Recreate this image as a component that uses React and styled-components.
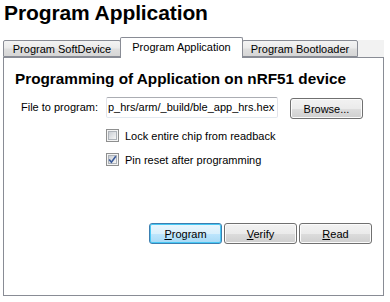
import React from "react";
import styled, { createGlobalStyle } from "styled-components";

const Global = createGlobalStyle`
  html, body { margin: 0; padding: 0; background: #fff; }
  body { font-family: "Liberation Sans", Arial, sans-serif; color: #000; }
`;

const Page = styled.div`
  width: 390px;
  height: 302px;
  box-sizing: border-box;
  padding: 1px 0 0 3px;
`;

const Title = styled.h1`
  margin: 0 0 12px 1px;
  height: 24px;
  font-size: 21px;
  line-height: 24px;
  font-weight: bold;
  letter-spacing: -0.1px;
`;

const TabStrip = styled.div`
  display: flex;
  align-items: flex-end;
  width: 381px;
  height: 20px;
`;

const Tab = styled.div`
  position: relative;
  box-sizing: border-box;
  width: ${(p) => p.$w}px;
  margin-left: ${(p) => (p.$first ? 0 : -1)}px;
  height: ${(p) => (p.$active ? 21 : 17)}px;
  margin-bottom: ${(p) => (p.$active ? -1 : 0)}px;
  z-index: ${(p) => (p.$active ? 2 : 1)};
  border: 1px solid #898c95;
  border-bottom: ${(p) => (p.$active ? "none" : "1px solid #898c95")};
  border-radius: 2px 2px 0 0;
  background: ${(p) =>
    p.$active
      ? "#fff"
      : "linear-gradient(#f3f3f3 0%, #ebebeb 45%, #dedede 55%, #d6d6d6 100%)"};
  font-size: 11px;
  line-height: 15px;
  text-align: center;
  white-space: nowrap;
  padding-top: ${(p) => (p.$active ? 2 : 1)}px;
`;

const TabFiller = styled.div`
  flex: 1;
  height: 17px;
  background: #f2f2f2;
`;

const Panel = styled.div`
  position: relative;
  z-index: 1;
  box-sizing: border-box;
  width: 381px;
  height: 239px;
  border: 1px solid #898c95;
  background: #fff;
  padding: 12px 11px 0 1px;
  display: flex;
  flex-direction: column;
`;

const Heading = styled.h2`
  margin: 0 0 9px 10px;
  font-size: 15.3px;
  line-height: 18px;
  font-weight: bold;
`;

const Form = styled.div`
  display: grid;
  grid-template-columns: 101px 172px 85px;
  align-items: start;
`;

const Label = styled.label`
  font-size: 11px;
  line-height: 21px;
  text-align: right;
  padding-right: 8px;
  white-space: nowrap;
`;

const Field = styled.div`
  box-sizing: border-box;
  height: 21px;
  border: 1px solid #e2e3ea;
  border-top-color: #abadb3;
  border-bottom-color: #e3e9ef;
  border-radius: 2px;
  font-size: 11px;
  line-height: 19px;
  padding-left: 1px;
  white-space: nowrap;
  overflow: hidden;
`;

const Button = styled.button`
  box-sizing: border-box;
  width: 73px;
  height: 21px;
  margin: ${(p) => (p.$browse ? "1px 0 0 12px" : "0")};
  padding: 0;
  border: 1px solid ${(p) => (p.$default ? "#3c7fb1" : "#707070")};
  border-radius: 3px;
  background: ${(p) =>
    p.$default
      ? "linear-gradient(#eaf6fd 0%, #d9f0fc 50%, #bee6fd 51%, #a7d9f5 100%)"
      : "linear-gradient(#f2f2f2 0%, #ebebeb 50%, #dddddd 51%, #cfcfcf 100%)"};
  box-shadow: inset 0 0 0 1px ${(p) => (p.$default ? "#48c8f4" : "#fbfbfb")};
  font-family: "Liberation Sans", Arial, sans-serif;
  font-size: 11px;
  color: #000;
  line-height: 18px;
`;

const Key = styled.span`
  text-decoration: underline;
  text-underline-offset: 1px;
`;

const CheckRow = styled.div`
  grid-column: 2 / 4;
  display: flex;
  align-items: center;
  gap: 6px;
  height: 13px;
  margin-top: ${(p) => p.$mt}px;
  font-size: 11px;
  white-space: nowrap;
`;

const Box = styled.span`
  box-sizing: border-box;
  width: 13px;
  height: 13px;
  border: 1px solid #8e8f8f;
  background: #f4f4f4;
  padding: 1px;
  display: flex;
`;

const BoxInner = styled.span`
  flex: 1;
  border: 1px solid #aeb3b9;
  background: linear-gradient(135deg, #cbcfd5 0%, #f6f6f6 100%);
  display: flex;
  align-items: center;
  justify-content: center;
`;

const Actions = styled.div`
  display: flex;
  justify-content: flex-end;
  gap: 2px;
  margin-top: 57px;
`;

const Check = () => (
  <svg width="9" height="9" viewBox="0 0 9 9" style={{ margin: "-2px" }}>
    <path d="M1.2 4.6 L3.4 7.2 L7.8 1.2" fill="none" stroke="#3a5a9a" strokeWidth="1.6" />
  </svg>
);

const CheckBox = ({ checked }) => (
  <Box>
    <BoxInner>{checked && <Check />}</BoxInner>
  </Box>
);

export default function App() {
  return (
    <Page>
      <Global />
      <Title>Program Application</Title>
      <TabStrip>
        <Tab $first $w={118}>Program SoftDevice</Tab>
        <Tab $active $w={123}>Program Application</Tab>
        <Tab $w={116}>Program Bootloader</Tab>
        <TabFiller />
      </TabStrip>
      <Panel>
        <Heading>Programming of Application on nRF51 device</Heading>
        <Form>
          <Label>File to program:</Label>
          <Field>p_hrs/arm/_build/ble_app_hrs.hex</Field>
          <Button $browse>Browse...</Button>
          <CheckRow $mt={10}>
            <CheckBox />
            Lock entire chip from readback
          </CheckRow>
          <CheckRow $mt={11}>
            <CheckBox checked />
            Pin reset after programming
          </CheckRow>
        </Form>
        <Actions>
          <Button $default>
            <Key>P</Key>rogram
          </Button>
          <Button>
            <Key>V</Key>erify
          </Button>
          <Button>
            <Key>R</Key>ead
          </Button>
        </Actions>
      </Panel>
    </Page>
  );
}
